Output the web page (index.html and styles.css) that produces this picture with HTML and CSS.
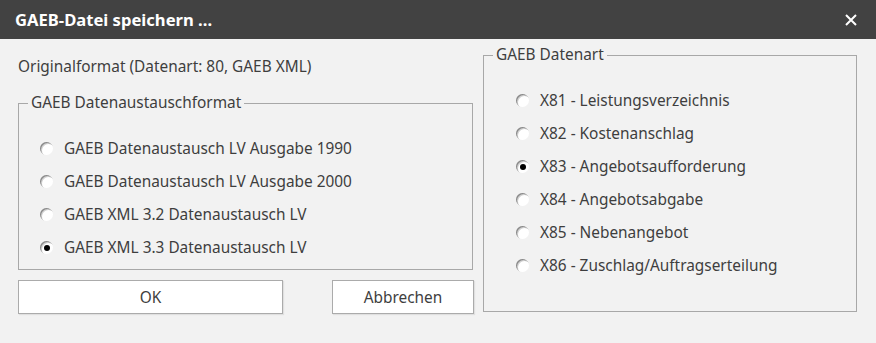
FILE: index.html
```html
<!DOCTYPE html>
<html lang="de">
<head>
  <meta charset="UTF-8" />
  <title>GAEB-Datei speichern ...</title>
  <link rel="stylesheet" href="styles.css">
</head>
<body>
  <div class="dialog">
    <div class="titlebar">
      <span class="title">GAEB-Datei speichern ...</span>
      <svg class="close" width="12" height="12" viewBox="0 0 12 12">
        <path d="M1 1 L11 11 M11 1 L1 11" stroke="#fff" stroke-width="2" fill="none" />
      </svg>
    </div>

    <div class="content">
      <div class="left">
        <div class="orig">Originalformat (Datenart: 80, GAEB XML)</div>

        <fieldset class="group group-format">
          <legend>GAEB Datenaustauschformat</legend>
          <div class="options">
            <label class="radio"><span class="dot"></span>GAEB Datenaustausch LV Ausgabe 1990</label>
            <label class="radio"><span class="dot"></span>GAEB Datenaustausch LV Ausgabe 2000</label>
            <label class="radio"><span class="dot"></span>GAEB XML 3.2 Datenaustausch LV</label>
            <label class="radio"><span class="dot checked"></span>GAEB XML 3.3 Datenaustausch LV</label>
          </div>
        </fieldset>

        <div class="buttons">
          <button class="btn btn-ok">OK</button>
          <button class="btn btn-cancel">Abbrechen</button>
        </div>
      </div>

      <fieldset class="group group-type">
        <legend>GAEB Datenart</legend>
        <div class="options">
          <label class="radio"><span class="dot"></span>X81 - Leistungsverzeichnis</label>
          <label class="radio"><span class="dot"></span>X82 - Kostenanschlag</label>
          <label class="radio"><span class="dot checked"></span>X83 - Angebotsaufforderung</label>
          <label class="radio"><span class="dot"></span>X84 - Angebotsabgabe</label>
          <label class="radio"><span class="dot"></span>X85 - Nebenangebot</label>
          <label class="radio"><span class="dot"></span>X86 - Zuschlag/Auftragserteilung</label>
        </div>
      </fieldset>
    </div>
  </div>
</body>
</html>
```

FILE: styles.css
```css
body {
  margin: 0;
  font-family: "Noto Sans", "Open Sans", sans-serif;
  font-size: 15.4px;
  color: #3e3e3e;
  background: #f2f2f2;
}

.dialog {
  width: 876px;
  height: 343px;
  background: #f2f2f2;
}

.titlebar {
  height: 39px;
  background: #424242;
  display: flex;
  align-items: center;
  justify-content: space-between;
  padding: 0 19px 0 15px;
  box-sizing: border-box;
}

.title {
  color: #fff;
  font-weight: bold;
  font-size: 16.6px;
}

.content {
  display: flex;
  gap: 9px;
  padding: 6px 0 0 18px;
}

.left {
  width: 456px;
  padding-top: 12px;
}

.orig {
  line-height: 20px;
}

.group {
  margin: 0;
  border: 1px solid #a8a8a8;
  padding: 0;
  box-sizing: border-box;
}

.group legend {
  margin-left: 9px;
  padding: 0 3px;
  line-height: 20px;
}

.group-format {
  margin-top: 16px;
  width: 455px;
  height: 177px;
}

.group-format .options {
  padding: 19px 0 0 21px;
}

.group-type {
  width: 374px;
  height: 267px;
}

.group-type .options {
  padding: 19px 0 0 32px;
}

.radio {
  display: flex;
  align-items: center;
  height: 33px;
}

.dot {
  width: 13px;
  height: 13px;
  border-radius: 50%;
  background: #fff;
  box-shadow: inset 1px 1px 0 #8a8a8a, inset 2px 2px 0 #d0d0d0;
  margin-right: 11px;
  position: relative;
  flex: none;
}

.dot.checked::after {
  content: "";
  position: absolute;
  left: 4px;
  top: 4px;
  width: 6px;
  height: 6px;
  border-radius: 50%;
  background: #000;
}

.buttons {
  display: flex;
  justify-content: space-between;
  margin-top: 10px;
}

.btn {
  height: 34px;
  background: #fff;
  border: 1px solid #ababab;
  font-family: inherit;
  font-size: 15.4px;
  color: #3e3e3e;
  box-shadow: 1px 1px 1px #e0e0e0;
}

.btn-ok {
  width: 265px;
}

.btn-cancel {
  width: 142px;
}
```
